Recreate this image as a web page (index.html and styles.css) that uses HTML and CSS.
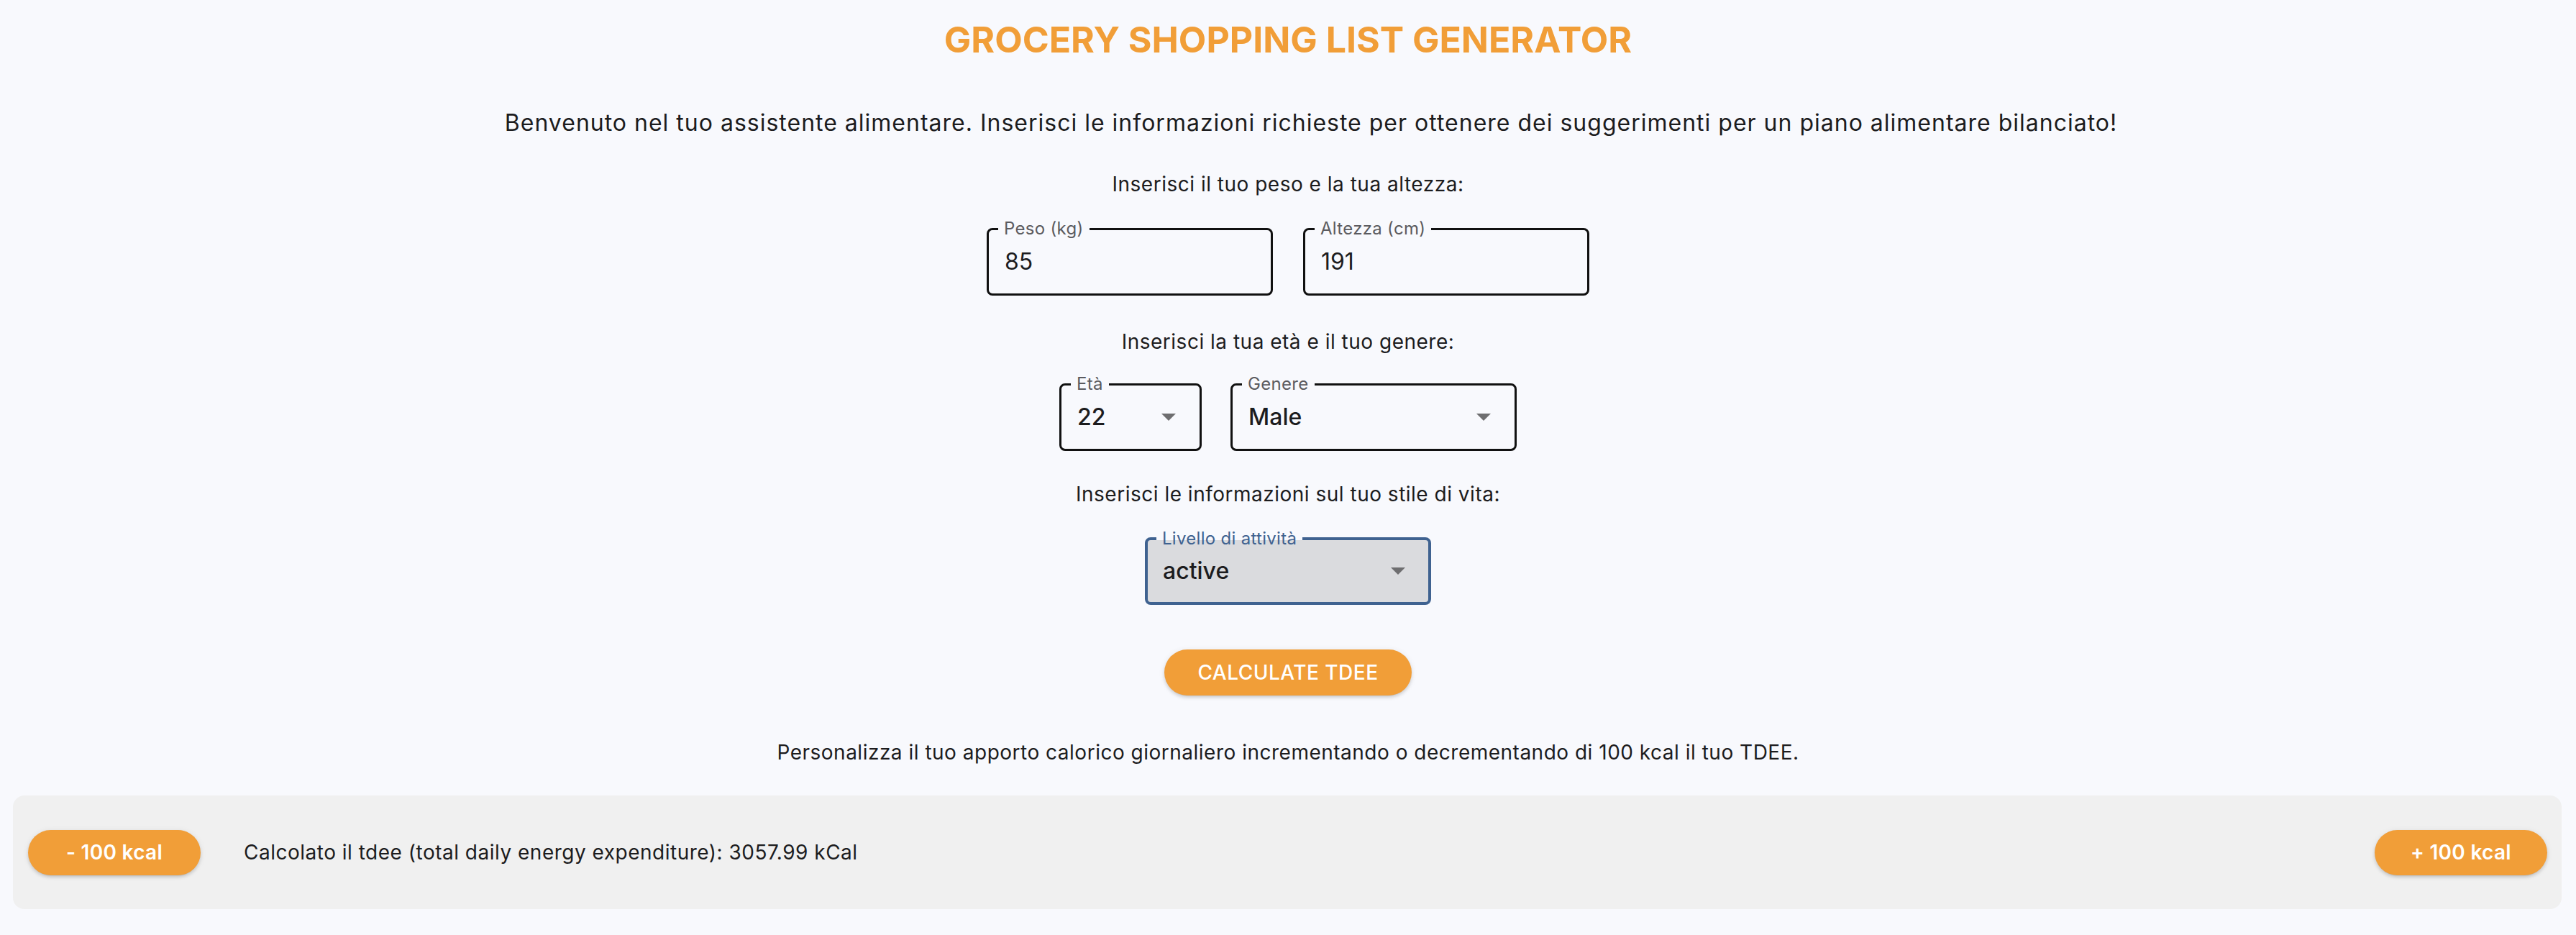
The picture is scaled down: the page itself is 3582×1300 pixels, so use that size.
FILE: index.html
```html
<!DOCTYPE html>
<html lang="it">
<head>
<meta charset="utf-8">
<title>Grocery Shopping List Generator</title>
<link rel="stylesheet" href="styles.css">
</head>
<body>
<main class="page">
  <h1 class="title">GROCERY SHOPPING LIST GENERATOR</h1>
  <p class="intro">Benvenuto nel tuo assistente alimentare. Inserisci le informazioni richieste per ottenere dei suggerimenti per un piano alimentare bilanciato!</p>

  <p class="section-label first">Inserisci il tuo peso e la tua altezza:</p>
  <div class="row row-gap-wide">
    <div class="field w-std">
      <span class="field-label">Peso (kg)</span>
      <span class="field-value">85</span>
    </div>
    <div class="field w-std">
      <span class="field-label">Altezza (cm)</span>
      <span class="field-value">191</span>
    </div>
  </div>

  <p class="section-label second">Inserisci la tua età e il tuo genere:</p>
  <div class="row row-second">
    <div class="field select w-small">
      <span class="field-label">Età</span>
      <span class="field-value strong">22</span>
      <svg class="arrow" width="20" height="10" viewBox="0 0 20 10"><path d="M0 0H20L10 10Z"/></svg>
    </div>
    <div class="field select w-std">
      <span class="field-label">Genere</span>
      <span class="field-value strong">Male</span>
      <svg class="arrow" width="20" height="10" viewBox="0 0 20 10"><path d="M0 0H20L10 10Z"/></svg>
    </div>
  </div>

  <p class="section-label third">Inserisci le informazioni sul tuo stile di vita:</p>
  <div class="row">
    <div class="field select focused w-std">
      <span class="field-label">Livello di attività</span>
      <span class="field-value strong">active</span>
      <svg class="arrow" width="20" height="10" viewBox="0 0 20 10"><path d="M0 0H20L10 10Z"/></svg>
    </div>
  </div>

  <button class="btn btn-calc">CALCULATE TDEE</button>

  <p class="section-label custom">Personalizza il tuo apporto calorico giornaliero incrementando o decrementando di 100 kcal il tuo TDEE.</p>

  <section class="panel">
    <button class="btn btn-kcal">- 100 kcal</button>
    <span class="tdee">Calcolato il tdee (total daily energy expenditure): 3057.99 kCal</span>
    <button class="btn btn-kcal push-right">+ 100 kcal</button>
  </section>
</main>
</body>
</html>
```

FILE: styles.css
```css
html, body {
  margin: 0;
  padding: 0;
  background: #f8f9fd;
}

body {
  font-family: Inter, "Noto Sans", "Liberation Sans", sans-serif;
  color: #1c1c1e;
}

.page {
  display: flex;
  flex-direction: column;
  align-items: center;
}

.title {
  margin: 26px 0 0;
  font-size: 50px;
  line-height: 58px;
  font-weight: 700;
  color: #f19e38;
}

.intro {
  margin: 67px 0 0;
  padding-left: 64px;
  font-size: 32px;
  line-height: 40px;
  letter-spacing: 1px;
}

.section-label {
  margin: 41px 0 0;
  font-size: 28px;
  line-height: 34px;
  letter-spacing: 0.5px;
}

.section-label.first {
  margin-top: 48px;
}

.section-label.second {
  margin-top: 47px;
}

.section-label.third {
  margin-top: 43px;
}

.section-label.custom {
  margin-top: 62px;
}

.row {
  display: flex;
  gap: 40px;
  margin-top: 43px;
}

.row-gap-wide {
  gap: 42px;
  margin-top: 44px;
}

.row-second {
  margin-top: 41px;
}

.field {
  position: relative;
  box-sizing: border-box;
  height: 94px;
  border: 3px solid #111;
  border-radius: 8px;
  display: flex;
  align-items: center;
  padding: 0 22px;
}

.w-std { width: 398px; }
.w-small { width: 198px; }

.field-label {
  position: absolute;
  top: -14px;
  left: 13px;
  padding: 0 8px;
  font-size: 24px;
  line-height: 24px;
  letter-spacing: 0.3px;
  color: #5b5b5f;
  background: #f8f9fd;
}

.field-value {
  font-size: 32px;
  line-height: 40px;
  color: #1c1c1e;
}

.field-value.strong {
  font-weight: 500;
}

.select {
  justify-content: space-between;
  padding-right: 33px;
}

.arrow {
  fill: #6e6e70;
}

.focused {
  border: 4px solid #3f6290;
  background: #dadbde;
  padding-left: 21px;
  padding-right: 32px;
}

.focused .field-label {
  color: #3f6290;
  left: 12px;
  background: linear-gradient(to bottom, #f8f9fd 0, #f8f9fd 14px, #dadbde 14px);
}

.btn {
  border: none;
  border-radius: 999px;
  background: #f19e38;
  color: #fff;
  font-family: Inter, "Noto Sans", "Liberation Sans", sans-serif;
  font-size: 28px;
  font-weight: 600;
  cursor: pointer;
  box-shadow: 0 4px 2px -4px rgba(0,0,0,0.2), 0 3px 4px 0 rgba(0,0,0,0.12), 0 1px 8px 0 rgba(0,0,0,0.08);
}

.btn-calc {
  margin-top: 62px;
  height: 64px;
  width: 344px;
  font-weight: 500;
  letter-spacing: 0.5px;
}

.panel {
  align-self: stretch;
  margin: 43px 20px 0 18px;
  height: 158px;
  box-sizing: border-box;
  background: #f0f0f0;
  border-radius: 16px;
  display: flex;
  align-items: center;
  padding: 0 20px 0 21px;
}

.btn-kcal {
  height: 63px;
  width: 240px;
  letter-spacing: 0.3px;
}

.tdee {
  margin-left: 60px;
  font-size: 28px;
  line-height: 34px;
  letter-spacing: 0.5px;
}

.push-right {
  margin-left: auto;
}
```
